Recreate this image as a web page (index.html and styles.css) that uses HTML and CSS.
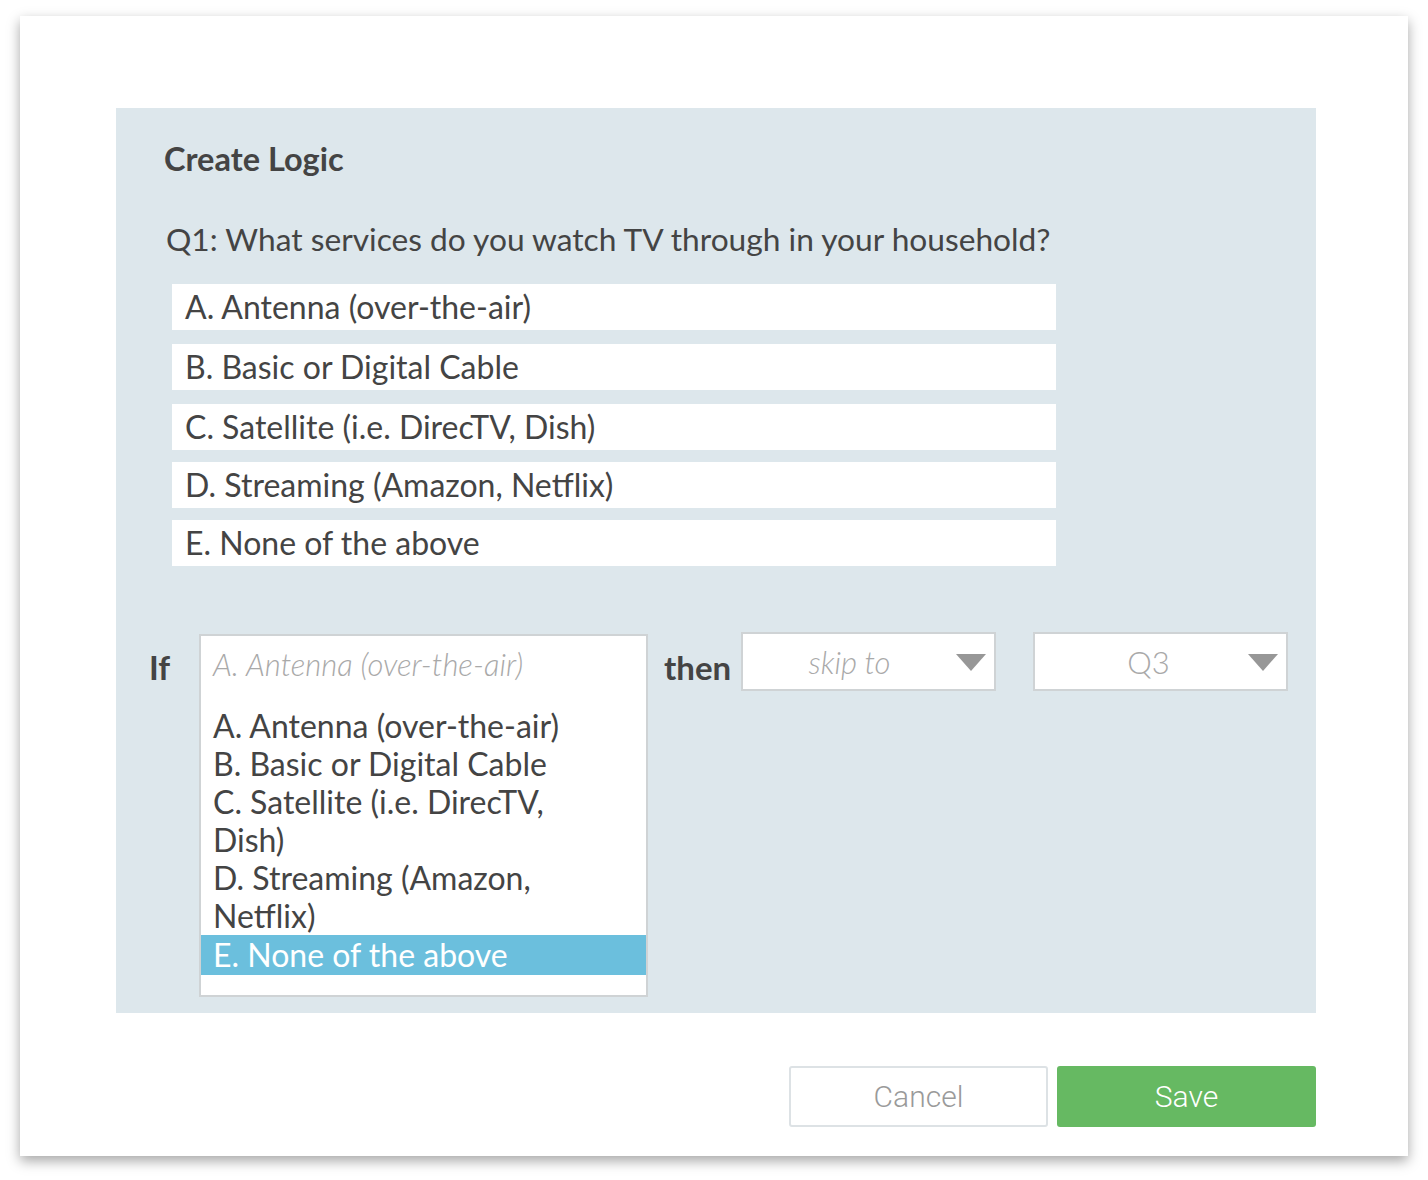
FILE: index.html
```html
<!DOCTYPE html>
<html>
<head>
<meta charset="utf-8">
<link rel="stylesheet" href="styles.css">
</head>
<body>
<div class="card">
  <div class="panel">
    <h1 class="title">Create Logic</h1>
    <p class="question">Q1: What services do you watch TV through in your household?</p>
    <ul class="answers">
      <li>A. Antenna (over-the-air)</li>
      <li>B. Basic or Digital Cable</li>
      <li>C. Satellite (i.e. DirecTV, Dish)</li>
      <li>D. Streaming (Amazon, Netflix)</li>
      <li>E. None of the above</li>
    </ul>
    <div class="logic">
      <span class="kw kw-if">If</span>
      <div class="listbox">
        <div class="placeholder">A. Antenna (over-the-air)</div>
        <ul class="opts">
          <li>A. Antenna (over-the-air)</li>
          <li>B. Basic or Digital Cable</li>
          <li>C. Satellite (i.e. DirecTV, Dish)</li>
          <li>D. Streaming (Amazon, Netflix)</li>
          <li class="sel">E. None of the above</li>
        </ul>
      </div>
      <span class="kw kw-then">then</span>
      <div class="select">
        <span class="sel-text">skip to</span>
        <span class="arrow"></span>
      </div>
      <div class="select select-q">
        <span class="sel-text">Q3</span>
        <span class="arrow"></span>
      </div>
    </div>
  </div>
  <div class="actions">
    <button class="btn btn-cancel">Cancel</button>
    <button class="btn btn-save">Save</button>
  </div>
</div>
</body>
</html>
```

FILE: styles.css
```css
* { box-sizing: border-box; }
html, body { margin: 0; padding: 0; background: #fff; }
body {
  font-family: Lato, "Liberation Sans", sans-serif;
  color: #444;
  padding: 16px 20px 24px 20px;
}
.card {
  width: 1388px;
  height: 1140px;
  background: #fff;
  box-shadow: 0 5px 12px rgba(0,0,0,0.35);
  padding: 92px 92px 0 96px;
}
.panel {
  width: 1200px;
  height: 905px;
  background: #dde7ec;
  padding: 31px 0 0 0;
}
.title {
  margin: 0 0 0 48px;
  font-size: 32.5px;
  line-height: 40px;
  font-weight: 700;
  color: #444;
}
.question {
  margin: 40px 0 0 50px;
  font-size: 31.7px;
  line-height: 40px;
  font-weight: 400;
  color: #444;
}
.answers {
  list-style: none;
  margin: 25px 0 0 56px;
  padding: 0;
  width: 884px;
}
.answers li {
  background: #fff;
  height: 46px;
  line-height: 46px;
  font-size: 32px;
  padding-left: 13px;
  margin-bottom: 14px;
  color: #444;
}
.answers li:nth-child(n+3) { margin-bottom: 12px; }
.logic {
  display: flex;
  align-items: flex-start;
  margin-top: 68px;
}
.kw {
  font-weight: 700;
  font-size: 33px;
  line-height: 40px;
  color: #444;
}
.kw-if { margin: 13px 0 0 33px; width: 50px; }
.kw-then { margin: 13px 0 0 16px; width: 77px; }
.listbox {
  width: 449px;
  height: 363px;
  background: #fff;
  border: 2px solid #cfd3d5;
  padding-top: 9px;
}
.placeholder {
  font-size: 31px;
  line-height: 38px;
  font-style: italic;
  font-weight: 300;
  color: #a9a9a9;
  padding-left: 12px;
}
.opts {
  list-style: none;
  margin: 24px 0 0 0;
  padding: 0;
}
.opts li {
  font-size: 32px;
  line-height: 38px;
  padding: 0 50px 0 12px;
  color: #444;
}
.opts li.sel {
  background: #6bbfdd;
  color: #fff;
  line-height: 40px;
}
.select {
  margin-top: -2px;
  width: 255px;
  height: 59px;
  background: #fff;
  border: 2px solid #cfd3d5;
  display: flex;
  align-items: center;
  padding: 0 8px 0 0;
}
.select-q { margin-left: 37px; }
.sel-text {
  flex: 1;
  text-align: center;
  font-size: 31px;
  font-style: italic;
  font-weight: 300;
  color: #a9a9a9;
  padding-left: 0;
}
.select-q .sel-text { padding-left: 14px; font-style: normal; }
.arrow {
  width: 0;
  height: 0;
  border-left: 15px solid transparent;
  border-right: 15px solid transparent;
  border-top: 17px solid #979797;
  margin-top: 2px;
}
.actions {
  display: flex;
  justify-content: flex-end;
  gap: 9px;
  margin-top: 53px;
  width: 1200px;
}
.btn {
  width: 259px;
  height: 61px;
  border-radius: 3px;
  font-family: Roboto, "Liberation Sans", sans-serif;
  font-size: 30px;
  font-weight: 300;
  cursor: pointer;
}
.btn-cancel {
  background: #fff;
  border: 2px solid #dde2e5;
  color: #9a9a9a;
}
.btn-save {
  background: #66b962;
  border: none;
  color: #fff;
}
```
